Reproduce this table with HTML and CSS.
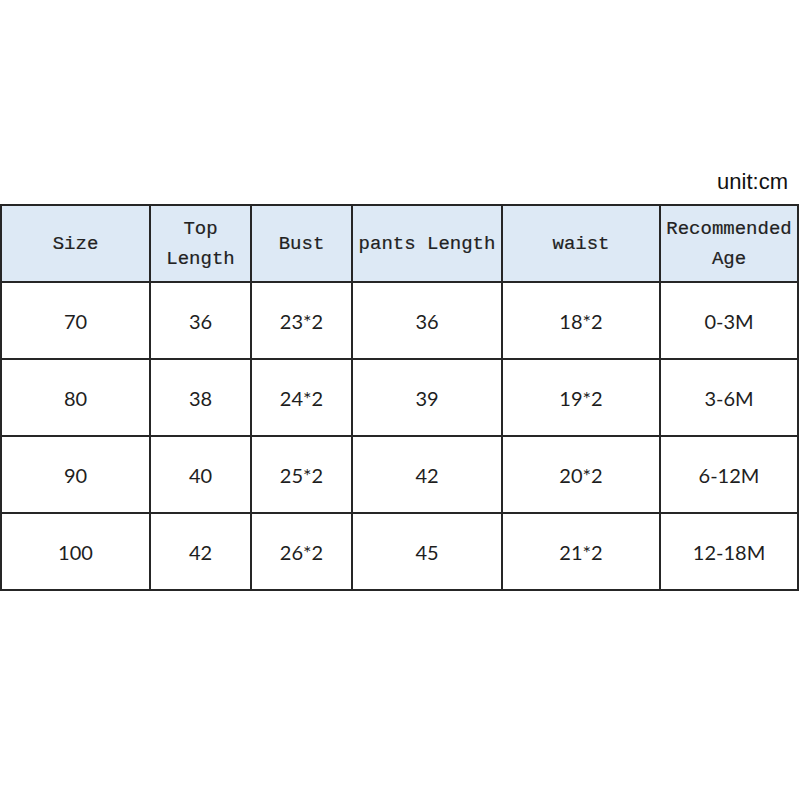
FILE: index.html
```html
<!DOCTYPE html>
<html>
<head>
<meta charset="utf-8">
<link rel="stylesheet" href="styles.css">
</head>
<body>
<div class="page">
  <div class="unit">unit:cm</div>
  <table class="sizes">
    <colgroup>
      <col class="c1"><col class="c2"><col class="c3"><col class="c4"><col class="c5"><col class="c6">
    </colgroup>
    <thead>
      <tr>
        <th>Size</th>
        <th>Top<br>Length</th>
        <th>Bust</th>
        <th>pants Length</th>
        <th>waist</th>
        <th>Recommended<br>Age</th>
      </tr>
    </thead>
    <tbody>
      <tr><td>70</td><td>36</td><td>23*2</td><td>36</td><td>18*2</td><td>0-3M</td></tr>
      <tr><td>80</td><td>38</td><td>24*2</td><td>39</td><td>19*2</td><td>3-6M</td></tr>
      <tr><td>90</td><td>40</td><td>25*2</td><td>42</td><td>20*2</td><td>6-12M</td></tr>
      <tr><td>100</td><td>42</td><td>26*2</td><td>45</td><td>21*2</td><td>12-18M</td></tr>
    </tbody>
  </table>
</div>
</body>
</html>
```
FILE: styles.css
```css
html, body {
  margin: 0;
  padding: 0;
  background: #ffffff;
}
.page {
  width: 800px;
  height: 800px;
  padding-top: 168px;
  box-sizing: border-box;
}
.unit {
  font-family: "Liberation Sans", Arial, sans-serif;
  font-size: 22px;
  line-height: 28px;
  height: 28px;
  color: #111;
  text-align: right;
  padding-right: 12px;
  margin-bottom: 8px;
}
.sizes {
  border-collapse: collapse;
  table-layout: fixed;
  width: 797px;
}
.c1 { width: 149px; }
.c2 { width: 101px; }
.c3 { width: 101px; }
.c4 { width: 150px; }
.c5 { width: 158px; }
.c6 { width: 138px; }
.sizes th, .sizes td {
  border: 2px solid #262626;
  text-align: center;
  vertical-align: middle;
  padding: 0;
  height: 75px;
}
.sizes th {
  background: #dde9f5;
  font-family: "Liberation Mono", "Courier New", monospace;
  font-weight: normal;
  font-size: 19px;
  line-height: 30px;
  color: #222;
  -webkit-text-stroke: 0.2px #222;
}
.sizes td {
  font-family: Lato, "Open Sans", sans-serif;
  font-size: 20px;
  color: #1e1e1e;
}
```
